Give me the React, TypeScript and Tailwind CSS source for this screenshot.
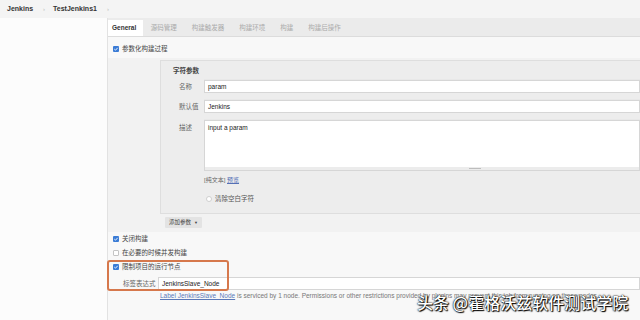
const font = "font-['Liberation_Sans','Noto_Sans_CJK_SC',sans-serif]";

function Check({ checked }: { checked?: boolean }) {
  if (!checked) {
    return <span className="h-[6px] w-[6px] shrink-0 rounded-[1px] border border-[#c4c4c4] bg-white" />;
  }
  return (
    <span className="flex h-[6px] w-[6px] shrink-0 items-center justify-center rounded-[1px] bg-[#3a7bd5]">
      <svg viewBox="0 0 6 6" className="h-[6px] w-[6px]">
        <path d="M1.3 3.1 2.5 4.2 4.7 1.8" stroke="white" strokeWidth="0.9" fill="none" />
      </svg>
    </span>
  );
}

function CheckRow({ label, checked }: { label: string; checked?: boolean }) {
  return (
    <div className="flex h-[14px] items-center gap-[3px] pl-[5px] text-[6.5px] text-[#444]">
      <Check checked={checked} />
      <span>{label}</span>
    </div>
  );
}

function Field({ label, value }: { label: string; value: string }) {
  return (
    <div className="flex items-center">
      <span className="w-[25px] shrink-0 pl-[18px] box-content text-[6.5px] text-[#666]">{label}</span>
      <div className="flex h-[13px] flex-1 items-center border border-[#d6d6d6] bg-white pl-[3px] text-[6.5px] text-[#222] shadow-[0_-1px_0_#e8e8e8]">
        {value}
      </div>
    </div>
  );
}

const tabs = ["源码管理", "构建触发器", "构建环境", "构建", "构建后操作"];

export default function App() {
  return (
    <div className={`relative flex h-[320px] w-[640px] flex-col overflow-hidden bg-[#f8f8f8] ${font}`}>
      {/* breadcrumb */}
      <div className="flex h-[18px] shrink-0 items-center bg-[#f4f4f4] pl-[7px] text-[7px] font-bold text-[#333]">
        <span>Jenkins</span>
        <span className="ml-[10px] text-[6px] font-normal text-[#bbb]">›</span>
        <span className="ml-[8px]">TestJenkins1</span>
        <span className="ml-[10px] text-[6px] font-normal text-[#bbb]">›</span>
      </div>

      <div className="flex flex-1">
        <div className="w-[107px] shrink-0 bg-[#fcfcfc]" />
        <div className="flex min-w-0 flex-1 flex-col border-l border-[#e2e2e2]">
          {/* tabs */}
          <div className="flex h-[19px] shrink-0 items-stretch border-b border-[#dcdcdc] bg-[#ebebeb] pt-[2px] text-[6.5px]">
            <div className="flex items-center bg-white px-[4px] pr-[7px] font-bold text-[#333]">General</div>
            {tabs.map((t) => (
              <div key={t} className="flex items-center px-[7.5px] text-[#aaa]">
                {t}
              </div>
            ))}
          </div>

          {/* content */}
          <div className="pt-[5px]">
            <CheckRow label="参数化构建过程" checked />

            <div className="mt-[2px] bg-[#f2f2f2] pt-[2px] pb-[4px]">
              <div className="ml-[52px] border-l border-t border-b border-[#dedede] bg-[#ededed] pt-[5px] pb-[9px]">
                <div className="h-[10px] pl-[12px] text-[6.5px] font-bold leading-[10px] text-[#444]">字符参数</div>
                <div className="mt-[4px] flex flex-col gap-[7px]">
                  <Field label="名称" value="param" />
                  <Field label="默认值" value="Jenkins" />
                  <div className="flex">
                    <span className="w-[25px] shrink-0 box-content pl-[18px] pt-[3px] text-[6.5px] text-[#666]">描述</span>
                    <div className="flex h-[51px] flex-1 flex-col border border-[#d6d6d6] bg-white shadow-[0_-1px_0_#e8e8e8]">
                      <div className="flex-1 pl-[3px] pt-[2px] text-[6.5px] text-[#222]">input a param</div>
                      <div className="flex h-[3px] justify-start bg-[#ececec] pl-[264px]">
                        <div className="mt-[1px] h-[1px] w-[12px] bg-[#bdbdbd]" />
                      </div>
                    </div>
                  </div>
                </div>
                <div className="mt-[4px] h-[10px] pl-[43px] text-[6px] leading-[10px] text-[#666]">
                  [纯文本] <span className="text-[#5570b5] underline">预览</span>
                </div>
                <div className="mt-[9px] flex h-[10px] items-center gap-[3px] pl-[45px] text-[6.5px] text-[#555]">
                  <span className="h-[6px] w-[6px] rounded-full border border-[#cfcfcf] bg-white" />
                  <span>清除空白字符</span>
                </div>
              </div>
              <div className="ml-[57px] mt-[3px] flex h-[11px] w-[37px] items-center justify-center gap-[3px] rounded-[1px] bg-[#e3e3e3] text-[5.5px] text-[#444]">
                <span>添加参数</span>
                <span className="text-[4px]">▼</span>
              </div>
            </div>

            <CheckRow label="关闭构建" checked />
            <CheckRow label="在必要的时候并发构建" />
            <CheckRow label="限制项目的运行节点" checked />

            <div className="mt-[3px] flex items-center">
              <span className="w-[35px] shrink-0 box-content pl-[15px] text-[6.5px] text-[#666]">标签表达式</span>
              <div className="flex h-[13px] flex-1 items-center border border-[#d6d6d6] bg-white pl-[3px] text-[6.5px] text-[#222]">
                JenkinsSlave_Node
              </div>
            </div>
            <div className="mt-[1px] whitespace-nowrap pl-[52px] text-[6.5px] leading-[10px] text-[#777]">
              <span className="text-[#5a78b8] underline">Label JenkinsSlave_Node</span> is serviced by 1 node. Permissions or other
              restrictions provided by plugins may prevent this job from running on those nodes.
            </div>
          </div>
        </div>
      </div>

      {/* annotation box */}
      <div className="absolute left-[107px] top-[260px] h-[31px] w-[122px] rounded-[3px] border-2 border-[#d6784c]" />

      {/* watermark */}
      <div className="absolute left-[417px] top-[292px] whitespace-nowrap font-['Noto_Sans_CJK_SC',sans-serif] text-[16px] font-medium leading-[20px] text-white [text-shadow:0_0_1px_#000,0_0_2px_#000,1px_1px_1px_#000]">
        头条 @霍格沃兹软件测试学院
      </div>
    </div>
  );
}
